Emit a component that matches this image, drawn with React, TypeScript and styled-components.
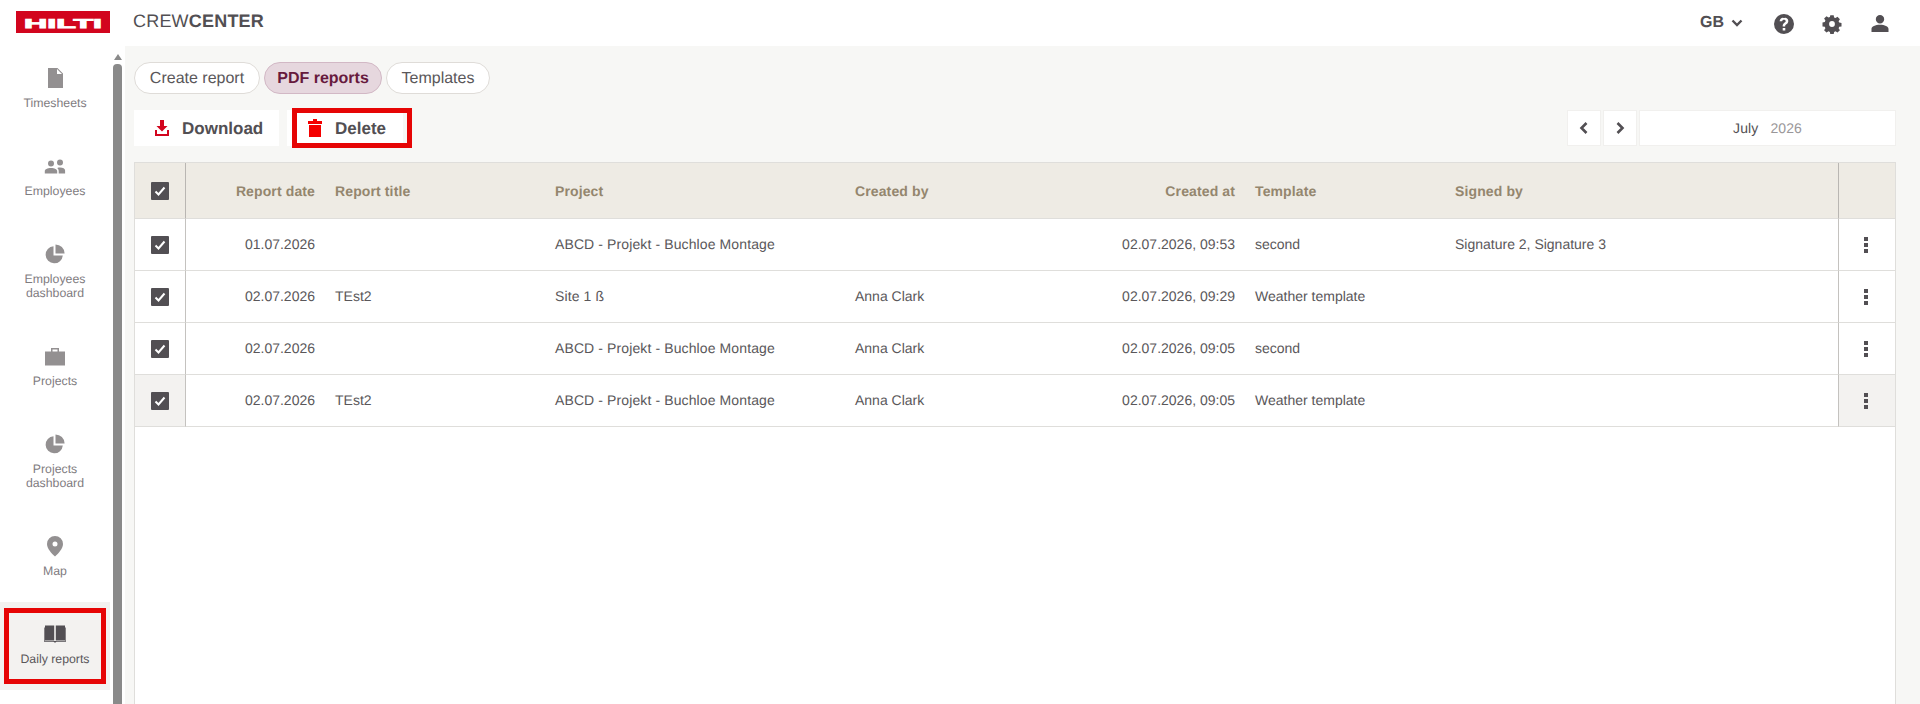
import React from "react";
import styled, { createGlobalStyle } from "styled-components";

const Global = createGlobalStyle`
  html, body { margin: 0; padding: 0; height: 100%; overflow: hidden; }
  body { font-family: "Liberation Sans", Arial, sans-serif; background: #f7f7f5; color: #524f53; text-rendering: geometricPrecision; }
  * { box-sizing: border-box; }
`;

const Page = styled.div`
  width: 1920px;
  height: 704px;
  display: flex;
  flex-direction: column;
  overflow: hidden;
`;

const Header = styled.header`
  height: 46px;
  flex: none;
  background: #fff;
  display: flex;
  align-items: center;
  padding: 0 30px 0 16px;
`;

const Logo = styled.svg`
  width: 94px;
  height: 22px;
  margin-top: -3px;
  flex: none;
`;

const Brand = styled.div`
  margin-left: 23px;
  font-size: 18px;
  letter-spacing: 0.2px;
  margin-top: -3px;
  color: #524f53;
  b { font-weight: 700; }
`;

const HeaderRight = styled.div`
  margin-left: auto;
  display: flex;
  align-items: center;
  margin-top: 1px;
`;

const Lang = styled.div`
  display: flex;
  align-items: center;
  gap: 7px;
  font-size: 16px;
  font-weight: 700;
  margin-right: 31px;
  margin-top: -2px;
`;

const HeaderIcon = styled.svg<{ $gap: number }>`
  width: 20px;
  height: 20px;
  fill: #524f53;
  margin-right: ${(p) => p.$gap}px;
  flex: none;
`;

const Body = styled.div`
  flex: 1;
  display: flex;
  min-height: 0;
`;

const Sidebar = styled.nav`
  width: 110px;
  flex: none;
  background: #fff;
  display: flex;
  flex-direction: column;
`;

const NavItem = styled.div<{ $active?: boolean }>`
  position: relative;
  padding: 20px 6px 24px;
  display: flex;
  flex-direction: column;
  align-items: center;
  background: ${(p) => (p.$active ? "#f3f2f0" : "#fff")};
  color: ${(p) => (p.$active ? "#5a575a" : "#7f7c7f")};
  ${(p) =>
    p.$active
      ? `&::after { content: ""; position: absolute; left: 4px; right: 4px; top: 6px; bottom: 6px; border: 5px solid #e60505; }`
      : ""}
`;

const NavIcon = styled.svg<{ $active?: boolean }>`
  width: 24px;
  height: 24px;
  fill: ${(p) => (p.$active ? "#524f53" : "#939091")};
  margin-bottom: 6px;
`;

const NavLabel = styled.div`
  font-size: 12.3px;
  line-height: 14px;
  text-align: center;
`;

const ScrollTrack = styled.div`
  width: 15px;
  flex: none;
  background: #fff;
  padding: 8px 3px 0;
  display: flex;
  flex-direction: column;
  align-items: center;
`;

const ScrollArrow = styled.div`
  width: 0;
  height: 0;
  border-left: 4.5px solid transparent;
  border-right: 4.5px solid transparent;
  border-bottom: 6px solid #8a8a8a;
`;

const ScrollThumb = styled.div`
  width: 9px;
  flex: 1;
  margin-top: 4px;
  background: #8a8a8a;
  border-radius: 4px 4px 0 0;
`;

const Main = styled.main`
  flex: 1;
  min-width: 0;
  padding: 16px 24px 0 9px;
  background: #f7f7f5;
  display: flex;
  flex-direction: column;
`;

const Tabs = styled.div`
  display: flex;
  gap: 4px;
  height: 32px;
`;

const Tab = styled.div<{ $active?: boolean; $w: number }>`
  width: ${(p) => p.$w}px;
  height: 32px;
  padding-top: 1px;
  border-radius: 16px;
  border: 1px solid ${(p) => (p.$active ? "#d2b8c5" : "#dfdcd8")};
  background: ${(p) => (p.$active ? "#e6d7de" : "#fff")};
  color: ${(p) => (p.$active ? "#671a3d" : "#5a575a")};
  font-weight: ${(p) => (p.$active ? 700 : 400)};
  font-size: 16px;
  display: flex;
  align-items: center;
  justify-content: center;
`;

const Toolbar = styled.div`
  margin-top: 16px;
  height: 36px;
  display: flex;
  gap: 8px;
`;

const ActionButton = styled.div<{ $w: number; $outlined?: boolean }>`
  position: relative;
  width: ${(p) => p.$w}px;
  padding-top: 1px;
  background: #fff;
  display: flex;
  align-items: center;
  padding-left: 20px;
  gap: 12px;
  font-size: 17px;
  font-weight: 700;
  color: #524f53;
  ${(p) =>
    p.$outlined
      ? `&::after { content: ""; position: absolute; left: 5px; right: -9px; top: -2px; bottom: -2px; border: 5px solid #e60505; }`
      : ""}
`;

const ActionIcon = styled.svg<{ $color: string }>`
  width: 16px;
  height: 18px;
  margin-top: -1px;
  fill: ${(p) => p.$color};
  flex: none;
`;

const Pager = styled.div`
  margin-left: auto;
  display: flex;
  gap: 2px;
`;

const PagerButton = styled.div`
  width: 34px;
  background: #fff;
  border: 1px solid #f1f0ee;
  display: flex;
  align-items: center;
  justify-content: center;
`;

const Chevron = styled.svg`
  width: 10px;
  height: 12px;
  fill: none;
  stroke: #524f53;
  stroke-width: 2.6;
`;

const MonthBox = styled.div`
  width: 257px;
  background: #fff;
  border: 1px solid #f1f0ee;
  display: flex;
  align-items: center;
  justify-content: center;
  gap: 12px;
  font-size: 14px;
  letter-spacing: 0.1px;
  span { color: #9a9799; }
`;

const TableWrap = styled.div`
  margin-top: 16px;
  flex: 1;
  background: #fff;
  border: 1px solid #dfdedb;
  border-bottom: none;
`;

const Table = styled.table`
  width: 100%;
  table-layout: fixed;
  border-collapse: separate;
  border-spacing: 0;
  font-size: 14px;
`;

const Th = styled.th<{ $right?: boolean }>`
  height: 56px;
  background: #eeebe4;
  color: #94866e;
  font-weight: 700;
  letter-spacing: 0.12px;
  text-align: ${(p) => (p.$right ? "right" : "left")};
  padding: 0 10px;
  border-bottom: 1px solid #dfdedb;
`;

const Td = styled.td<{ $right?: boolean }>`
  height: 52px;
  color: #5a575a;
  text-align: ${(p) => (p.$right ? "right" : "left")};
  padding: 0 10px 1px;
  border-bottom: 1px solid #dfdedb;
`;

const ProjectCell = styled(Td)`
  letter-spacing: 0.11px;
`;

const FixedHeadLeft = styled(Th)`
  padding: 0;
  text-align: center;
  border-right: 1px solid #b9b6b2;
`;

const FixedHeadRight = styled(Th)`
  padding: 0;
  border-left: 1px solid #b9b6b2;
`;

const FixedLeft = styled(Td)<{ $hover?: boolean }>`
  padding: 0;
  text-align: center;
  border-right: 1px solid #c4c2bf;
  background: ${(p) => (p.$hover ? "#f3f2f0" : "#fff")};
`;

const FixedRight = styled(Td)<{ $hover?: boolean }>`
  padding: 0;
  text-align: center;
  border-left: 1px solid #c4c2bf;
  background: ${(p) => (p.$hover ? "#f3f2f0" : "#fff")};
`;

const CheckBox = styled.span`
  display: inline-flex;
  vertical-align: middle;
  width: 18px;
  height: 18px;
  background: #524f53;
  border-radius: 1px;
  align-items: center;
  justify-content: center;
`;

const Tick = styled.svg`
  width: 14px;
  height: 14px;
  fill: none;
  stroke: #fff;
  stroke-width: 2;
`;

const Dots = styled.span`
  display: inline-flex;
  flex-direction: column;
  vertical-align: middle;
  gap: 2px;
  margin-left: -2px;
  i { display: block; width: 4px; height: 4px; background: #524f53; }
`;

const pie = "M10.5 4.2A8.6 8.6 0 1 0 19.8 13.5H10.5ZM12.5 2.4V11.5H21.6A9.2 9.2 0 0 0 12.5 2.4Z";
const nav = [
  { label: "Timesheets", d: "M5 2H14.5L20 7.5V22H5ZM14 3V8H19Z" },
  { label: "Employees", d: "M8 6.5a3 3 0 1 1 0 6a3 3 0 0 1 0-6ZM17 5.5a3 3 0 1 1 0 6a3 3 0 0 1 0-6ZM1.8 19.5v-2.2c0-2 2.6-3.3 6.2-3.3s6.2 1.3 6.2 3.3v2.2ZM15.7 19.5v-2.5c0-1.2-.6-2.2-1.4-3c.9-.3 1.8-.4 2.7-.4 3 0 5.1 1.2 5.1 3v2.9Z" },
  { label: "Employees\ndashboard", d: pie },
  { label: "Projects", d: "M2 7.5H8V4H16V7.5H22V21.5H2ZM9.5 5.5V7.5H14.5V5.5Z" },
  { label: "Projects\ndashboard", d: pie },
  { label: "Map", d: "M12 2a8 8 0 0 1 8 8c0 4.6-4.6 9.4-8 12.500c-3.400-3.100-8-7.900-8-12.500a8 8 0 0 1 8-8ZM12 7.500a2.500 2.500 0 1 0 0 5a2.500 2.500 0 0 0 0-5Z" },
  { label: "Daily reports", d: "M2 3.500H11.200V18.500H2ZM12.800 3.500H22V18.500H12.800ZM1 5.500V19.800H10.500L12 20.800L13.500 19.800H23V5.500H22.300V19.100H1.700V5.500Z", active: true },
];

const rows = [
  { date: "01.07.2026", title: "", project: "ABCD - Projekt - Buchloe Montage", by: "", at: "02.07.2026, 09:53", tpl: "second", signed: "Signature 2, Signature 3" },
  { date: "02.07.2026", title: "TEst2", project: "Site 1 ß", by: "Anna Clark", at: "02.07.2026, 09:29", tpl: "Weather template", signed: "" },
  { date: "02.07.2026", title: "", project: "ABCD - Projekt - Buchloe Montage", by: "Anna Clark", at: "02.07.2026, 09:05", tpl: "second", signed: "" },
  { date: "02.07.2026", title: "TEst2", project: "ABCD - Projekt - Buchloe Montage", by: "Anna Clark", at: "02.07.2026, 09:05", tpl: "Weather template", signed: "", hover: true },
];

const Check = () => (
  <CheckBox>
    <Tick viewBox="0 0 14 14"><path d="M2.500 7.500L5.500 10.500L11.500 3.500" /></Tick>
  </CheckBox>
);

export default function App() {
  return (
    <Page>
      <Global />
      <Header>
        <Logo viewBox="0 0 94 22">
          <rect width="94" height="22" fill="#d2051e" />
          <text x="47" y="16.500" textAnchor="middle" fontFamily="'Liberation Sans', sans-serif" fontWeight="700" fontSize="13" fill="#fff" textLength="78" lengthAdjust="spacingAndGlyphs" stroke="#fff" strokeWidth="0.8">HILTI</text>
        </Logo>
        <Brand>CREW<b>CENTER</b></Brand>
        <HeaderRight>
          <Lang>
            GB
            <svg width="12" height="8" viewBox="0 0 12 8" fill="none" stroke="#524f53" strokeWidth="2.400"><path d="M1.500 1.500L6 6L10.500 1.500" /></svg>
          </Lang>
          <HeaderIcon $gap={28} viewBox="0 0 20 20">
            <path fillRule="evenodd" d="M10 0a10 10 0 1 1 0 20a10 10 0 0 1 0-20ZM8.700 14v2.600h2.600V14ZM10 3.500c-2.500 0-4.200 1.400-4.400 3.700h2.600c.1-1 .8-1.500 1.800-1.500s1.700.6 1.700 1.400c0 .7-.4 1.100-1.300 1.700c-1.300.9-1.700 1.700-1.700 3.200v.5h2.500v-.3c0-.9.300-1.300 1.200-1.900c1.300-.8 1.900-1.900 1.900-3.300c0-2.100-1.800-3.500-4.300-3.500Z" />
          </HeaderIcon>
          <HeaderIcon $gap={28} viewBox="0 0 20 20">
            <path fillRule="evenodd" d="M8.300 1.500h3.400l.4 2.300l1.400.6l2-1.300l2.400 2.400l-1.300 2l.6 1.400l2.300.4v3.400l-2.300.4l-.6 1.400l1.300 2l-2.400 2.400l-2-1.300l-1.400.6l-.4 2.300H8.300l-.4-2.300l-1.400-.6l-2 1.300l-2.400-2.400l1.300-2l-.6-1.400l-2.300-.4V8.700l2.300-.4l.6-1.400l-1.300-2l2.400-2.400l2 1.300l1.400-.6ZM10 7.400a2.900 2.900 0 1 0 0 5.800a2.900 2.900 0 0 0 0-5.800Z" transform="translate(0 -0.300)" />
          </HeaderIcon>
          <HeaderIcon $gap={0} viewBox="0 0 20 20">
            <path d="M10 1a4.200 4.200 0 1 1 0 8.400a4.200 4.200 0 0 1 0-8.400ZM1.500 18v-3c0-2.500 3.800-4.200 8.500-4.200s8.500 1.700 8.500 4.200v3Z" />
          </HeaderIcon>
        </HeaderRight>
      </Header>
      <Body>
        <Sidebar>
          {nav.map((n) => (
            <NavItem key={n.label} $active={n.active}>
              <NavIcon viewBox="0 0 24 24" $active={n.active}><path fillRule="evenodd" d={n.d} /></NavIcon>
              <NavLabel>{n.label.split("\n").map((l) => <div key={l}>{l}</div>)}</NavLabel>
            </NavItem>
          ))}
        </Sidebar>
        <ScrollTrack>
          <ScrollArrow />
          <ScrollThumb />
        </ScrollTrack>
        <Main>
          <Tabs>
            <Tab $w={126}>Create report</Tab>
            <Tab $w={118} $active>PDF reports</Tab>
            <Tab $w={104}>Templates</Tab>
          </Tabs>
          <Toolbar>
            <ActionButton $w={145}>
              <ActionIcon $color="#d2051e" viewBox="0 0 16 18"><path d="M6 1H10V7H13.500L8 12.500L2.500 7H6ZM1 11H3V15H13V11H15V17H1Z" /></ActionIcon>
              Download
            </ActionButton>
            <ActionButton $w={116} $outlined>
              <ActionIcon $color="#f40000" viewBox="0 0 16 18"><path d="M6 0H10V2H15V5H1V2H6ZM2 6H14V18H2Z" /></ActionIcon>
              Delete
            </ActionButton>
            <Pager>
              <PagerButton><Chevron viewBox="0 0 10 12"><path d="M7.500 1L2.500 6L7.500 11" /></Chevron></PagerButton>
              <PagerButton><Chevron viewBox="0 0 10 12"><path d="M2.500 1L7.500 6L2.500 11" /></Chevron></PagerButton>
              <MonthBox>July <span>2026</span></MonthBox>
            </Pager>
          </Toolbar>
          <TableWrap>
            <Table>
              <colgroup>
                <col style={{ width: 51 }} />
                <col style={{ width: 139 }} />
                <col style={{ width: 220 }} />
                <col style={{ width: 300 }} />
                <col style={{ width: 200 }} />
                <col style={{ width: 200 }} />
                <col style={{ width: 200 }} />
                <col />
                <col style={{ width: 57 }} />
              </colgroup>
              <thead>
                <tr>
                  <FixedHeadLeft><Check /></FixedHeadLeft>
                  <Th $right>Report date</Th>
                  <Th>Report title</Th>
                  <Th>Project</Th>
                  <Th>Created by</Th>
                  <Th $right>Created at</Th>
                  <Th>Template</Th>
                  <Th>Signed by</Th>
                  <FixedHeadRight />
                </tr>
              </thead>
              <tbody>
                {rows.map((r, i) => (
                  <tr key={i}>
                    <FixedLeft $hover={r.hover}><Check /></FixedLeft>
                    <Td $right>{r.date}</Td>
                    <Td>{r.title}</Td>
                    <ProjectCell>{r.project}</ProjectCell>
                    <Td>{r.by}</Td>
                    <Td $right>{r.at}</Td>
                    <Td>{r.tpl}</Td>
                    <Td>{r.signed}</Td>
                    <FixedRight $hover={r.hover}><Dots><i /><i /><i /></Dots></FixedRight>
                  </tr>
                ))}
              </tbody>
            </Table>
          </TableWrap>
        </Main>
      </Body>
    </Page>
  );
}
